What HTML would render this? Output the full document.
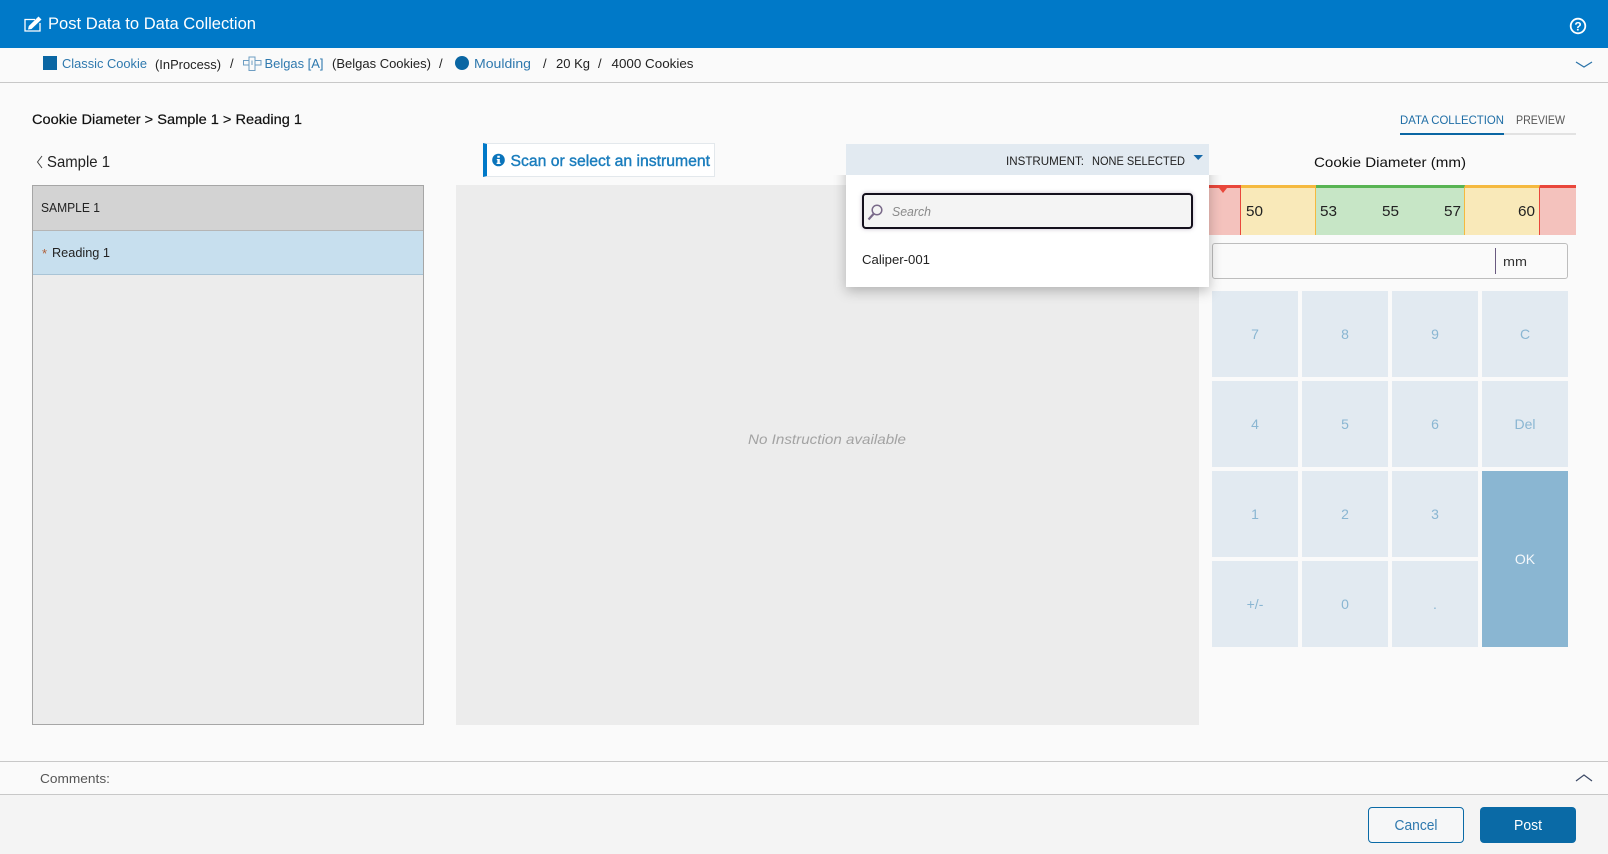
<!DOCTYPE html>
<html><head><meta charset="utf-8"><title>Post Data to Data Collection</title>
<style>
html,body{margin:0;padding:0;width:1608px;height:854px;overflow:hidden;background:#fafafa;font-family:"Liberation Sans",sans-serif}
div{position:absolute;box-sizing:border-box}
svg{position:absolute;left:0;top:0}
text{font-family:"Liberation Sans",sans-serif}
</style></head><body>
<div style="left:0;top:0;width:1608px;height:48px;background:#0079c8"></div>
<div style="left:0;top:82px;width:1608px;height:1px;background:#c8c8c8"></div>
<div style="left:1400px;top:133px;width:176px;height:2px;background:#e2e2e2"></div>
<div style="left:1400px;top:133px;width:104px;height:2px;background:#0a66a3"></div>

<div style="left:32px;top:185px;width:392px;height:540px;background:#ececec;border:1px solid #a6a6a6"></div>
<div style="left:33px;top:186px;width:390px;height:45px;background:#d3d3d3;border-bottom:1px solid #b5b5b5"></div>
<div style="left:33px;top:231px;width:390px;height:44px;background:#c7dfee;border-bottom:1px solid #a9c4d6"></div>

<div style="left:456px;top:185px;width:743px;height:540px;background:#ececec"></div>
<div style="left:483px;top:143px;width:232px;height:34px;background:#fff;border:1px solid #e3e8ec;border-left:4px solid #0079c8"></div>

<div style="left:1209px;top:185px;width:32px;height:50px;background:#f4c2bd;border-top:3px solid #e9473b;border-right:1px solid #e9473b"></div>
<div style="left:1241px;top:185px;width:75px;height:50px;background:#f9e9b9;border-top:3px solid #f5b93f;border-right:1px solid #f5b93f"></div>
<div style="left:1316px;top:185px;width:149px;height:50px;background:#c7e6c6;border-top:3px solid #58b453;border-right:1px solid #f5b93f"></div>
<div style="left:1465px;top:185px;width:75px;height:50px;background:#f9e9b9;border-top:3px solid #f5b93f;border-right:1px solid #e9473b"></div>
<div style="left:1540px;top:185px;width:36px;height:50px;background:#f4c2bd;border-top:3px solid #e9473b"></div>

<div style="left:1212px;top:243px;width:356px;height:36px;background:#fafafa;border:1px solid #bdbdbd;border-radius:3px"></div>
<div style="left:1495px;top:248px;width:1px;height:26px;background:#6a5a80"></div>

<div style="left:1212px;top:291px;width:86px;height:86px;background:#e2eaf1"></div>
<div style="left:1302px;top:291px;width:86px;height:86px;background:#e2eaf1"></div>
<div style="left:1392px;top:291px;width:86px;height:86px;background:#e2eaf1"></div>
<div style="left:1482px;top:291px;width:86px;height:86px;background:#e2eaf1"></div>
<div style="left:1212px;top:381px;width:86px;height:86px;background:#e2eaf1"></div>
<div style="left:1302px;top:381px;width:86px;height:86px;background:#e2eaf1"></div>
<div style="left:1392px;top:381px;width:86px;height:86px;background:#e2eaf1"></div>
<div style="left:1482px;top:381px;width:86px;height:86px;background:#e2eaf1"></div>
<div style="left:1212px;top:471px;width:86px;height:86px;background:#e2eaf1"></div>
<div style="left:1302px;top:471px;width:86px;height:86px;background:#e2eaf1"></div>
<div style="left:1392px;top:471px;width:86px;height:86px;background:#e2eaf1"></div>
<div style="left:1212px;top:561px;width:86px;height:86px;background:#e2eaf1"></div>
<div style="left:1302px;top:561px;width:86px;height:86px;background:#e2eaf1"></div>
<div style="left:1392px;top:561px;width:86px;height:86px;background:#e2eaf1"></div>
<div style="left:1482px;top:471px;width:86px;height:176px;background:#8ab6d2"></div>

<div style="left:846px;top:144px;width:363px;height:143px;background:#fff;box-shadow:0 4px 12px rgba(0,0,0,.25);clip-path:inset(31px -24px -24px -24px)"></div>
<div style="left:846px;top:144px;width:363px;height:31px;background:#e2eaf1"></div>
<div style="left:862px;top:193px;width:331px;height:36px;background:#f4f4f4;border:2px solid #14101c;border-radius:4px;box-shadow:0 0 4px rgba(90,70,110,.35)"></div>

<div style="left:0;top:761px;width:1608px;height:1px;background:#c8c8c8"></div>
<div style="left:0;top:794px;width:1608px;height:60px;background:#f4f4f4;border-top:1px solid #c8c8c8"></div>
<div style="left:1368px;top:807px;width:96px;height:36px;border:1px solid #0a6aa6;border-radius:4px;background:#f6f7f8"></div>
<div style="left:1480px;top:807px;width:96px;height:36px;background:#0a6aa6;border-radius:4px"></div>

<svg width="1608" height="854" viewBox="0 0 1608 854">
<!-- header -->
<path d="M35 19.500H25V31H40V23" fill="none" stroke="#fff" stroke-width="1.300"/>
<path d="M28 29.500L28.800 26L38.500 16.500L41.500 19.500L31.500 29Z" fill="#fff"/>
<text x="48" y="29" font-size="17" fill="#fff" textLength="208" lengthAdjust="spacingAndGlyphs">Post Data to Data Collection</text>
<circle cx="1578" cy="26" r="7.300" fill="none" stroke="#fff" stroke-width="1.800"/>
<text x="1578" y="30.500" font-size="12" font-weight="bold" fill="#fff" text-anchor="middle">?</text>

<!-- breadcrumb -->
<rect x="43" y="56" width="14" height="14" fill="#0a66a3"/>
<text x="62" y="68" font-size="13" fill="#2f79ae" textLength="85" lengthAdjust="spacingAndGlyphs">Classic Cookie</text>
<text x="155" y="69" font-size="13" fill="#222" textLength="66" lengthAdjust="spacingAndGlyphs">(InProcess)</text>
<text x="230" y="68" font-size="13" fill="#222">/</text>
<path d="M249 57H255V60.500H261V65H255V70.500H249V65H243.500V60.500H249Z M249 60.500V65 M252 60.500V65 M255 60.500V65" fill="none" stroke="#6d9dc2" stroke-width="1"/>
<text x="264.500" y="68" font-size="13" fill="#2f79ae" textLength="59" lengthAdjust="spacingAndGlyphs">Belgas [A]</text>
<text x="332" y="68" font-size="13" fill="#222" textLength="99" lengthAdjust="spacingAndGlyphs">(Belgas Cookies)</text>
<text x="439" y="68" font-size="13" fill="#222">/</text>
<circle cx="462" cy="63" r="7" fill="#0a66a3"/>
<text x="474" y="68" font-size="13" fill="#2f79ae" textLength="57" lengthAdjust="spacingAndGlyphs">Moulding</text>
<text x="543" y="68" font-size="13" fill="#222">/</text>
<text x="556" y="68" font-size="13" fill="#222" textLength="34" lengthAdjust="spacingAndGlyphs">20 Kg</text>
<text x="598" y="68" font-size="13" fill="#222">/</text>
<text x="611.500" y="68" font-size="13" fill="#222" textLength="82" lengthAdjust="spacingAndGlyphs">4000 Cookies</text>
<path d="M1576 62L1584 67L1592 62" fill="none" stroke="#2a73a8" stroke-width="1.200"/>

<!-- titles -->
<text x="32" y="124" font-size="14" fill="#111" stroke="#111" stroke-width=".2" textLength="270" lengthAdjust="spacingAndGlyphs">Cookie Diameter &gt; Sample 1 &gt; Reading 1</text>
<text x="1400" y="124" font-size="12" fill="#1f6ea6" textLength="104" lengthAdjust="spacingAndGlyphs">DATA COLLECTION</text>
<text x="1516" y="124" font-size="12" fill="#555" textLength="49" lengthAdjust="spacingAndGlyphs">PREVIEW</text>
<path d="M42 156L37.500 162L42 168" fill="none" stroke="#444" stroke-width="1"/>
<text x="47" y="167" font-size="16" fill="#222" textLength="63" lengthAdjust="spacingAndGlyphs">Sample 1</text>

<!-- left list -->
<text x="41" y="212" font-size="13" fill="#222" textLength="59" lengthAdjust="spacingAndGlyphs">SAMPLE 1</text>
<text x="42" y="258" font-size="13" fill="#b0603a">*</text>
<text x="52" y="257" font-size="13" fill="#222" textLength="58" lengthAdjust="spacingAndGlyphs">Reading 1</text>

<!-- scan -->
<circle cx="498.500" cy="160" r="6.300" fill="#0a74bb"/>
<path d="M497.300 155.800H499.800V157.800H497.300ZM496.800 159H499.800V162.800H500.600V164H496.600V162.800H497.400V160.100H496.800Z" fill="#fff"/>
<text x="510.500" y="166" font-size="15.500" fill="#1a7dbd" stroke="#1a7dbd" stroke-width=".4" textLength="199.500" lengthAdjust="spacingAndGlyphs">Scan or select an instrument</text>

<text x="827" y="444" font-size="14" font-style="italic" fill="#a3a3a3" text-anchor="middle" textLength="158" lengthAdjust="spacingAndGlyphs">No Instruction available</text>

<!-- dropdown -->
<text x="1006" y="165" font-size="12" fill="#222" textLength="78" lengthAdjust="spacingAndGlyphs">INSTRUMENT:</text>
<text x="1092" y="165" font-size="12" fill="#222" textLength="93" lengthAdjust="spacingAndGlyphs">NONE SELECTED</text>
<path d="M1193.500 155H1203L1198.200 160Z" fill="#1668a8"/>
<circle cx="877" cy="210" r="4.800" fill="none" stroke="#7a6a8a" stroke-width="1.500"/>
<path d="M873.500 214L868.500 219.500" stroke="#7a6a8a" stroke-width="2.200"/>
<text x="892" y="216" font-size="13" font-style="italic" fill="#8a8a8a" textLength="39" lengthAdjust="spacingAndGlyphs">Search</text>
<text x="862" y="264" font-size="13" fill="#222" textLength="68" lengthAdjust="spacingAndGlyphs">Caliper-001</text>

<!-- gauge -->
<text x="1390" y="167" font-size="14" fill="#111" text-anchor="middle" textLength="152" lengthAdjust="spacingAndGlyphs">Cookie Diameter (mm)</text>
<path d="M1219 188H1227L1223 193Z" fill="#e9473b"/>
<g font-size="15" fill="#222">
<text x="1246" y="216" textLength="17" lengthAdjust="spacingAndGlyphs">50</text>
<text x="1320" y="216" textLength="17" lengthAdjust="spacingAndGlyphs">53</text>
<text x="1382" y="216" textLength="17" lengthAdjust="spacingAndGlyphs">55</text>
<text x="1444" y="216" textLength="17" lengthAdjust="spacingAndGlyphs">57</text>
<text x="1518" y="216" textLength="17" lengthAdjust="spacingAndGlyphs">60</text>
</g>
<text x="1503" y="266" font-size="13" fill="#333" textLength="24" lengthAdjust="spacingAndGlyphs">mm</text>

<!-- keypad -->
<g font-size="14" fill="#8ab6d2" text-anchor="middle">
<text x="1255" y="339">7</text><text x="1345" y="339">8</text><text x="1435" y="339">9</text><text x="1525" y="339">C</text>
<text x="1255" y="429">4</text><text x="1345" y="429">5</text><text x="1435" y="429">6</text><text x="1525" y="429">Del</text>
<text x="1255" y="519">1</text><text x="1345" y="519">2</text><text x="1435" y="519">3</text>
<text x="1255" y="609">+/-</text><text x="1345" y="609">0</text><text x="1435" y="609">.</text>
<text x="1525" y="564" fill="#f4f8fb" font-size="14">OK</text>
</g>

<!-- footer -->
<text x="40" y="783" font-size="13" fill="#555" textLength="70" lengthAdjust="spacingAndGlyphs">Comments:</text>
<path d="M1576 781L1584 775L1592 781" fill="none" stroke="#3d4a66" stroke-width="1.200"/>
<text x="1416" y="830" font-size="14.500" fill="#2f79ae" text-anchor="middle" textLength="43" lengthAdjust="spacingAndGlyphs">Cancel</text>
<text x="1528" y="830" font-size="14.500" fill="#fff" text-anchor="middle" textLength="28" lengthAdjust="spacingAndGlyphs">Post</text>
</svg>
</body></html>
